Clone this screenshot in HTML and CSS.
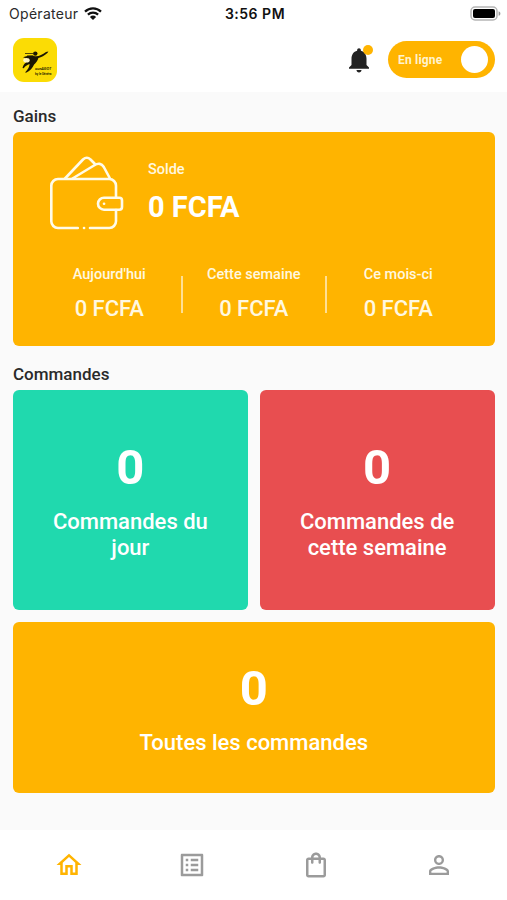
FILE: index.html
```html
<!DOCTYPE html>
<html lang="fr">
<head>
  <meta charset="UTF-8">
  <meta name="viewport" content="width=device-width, initial-scale=1.0">
  <title>Accueil</title>
  <link rel="stylesheet" href="styles.css">
</head>
<body>
  <div class="status-bar">
    <div class="carrier">
      <span>Opérateur</span>
      <svg class="wifi" viewBox="0 0 18 13">
        <path d="M1 4.600a11.600 11.600 0 0 1 16 0M3.900 7.600a7.400 7.400 0 0 1 10.200 0" fill="none" stroke="#111" stroke-width="2.200"/>
        <path d="M9 13L5.900 9.900a4.500 4.500 0 0 1 6.200 0z" fill="#111"/>
      </svg>
    </div>
    <div class="time">3:56 PM</div>
    <div class="battery-box">
      <svg class="battery" viewBox="0 0 31 15">
        <rect x="1" y="1" width="26" height="13" rx="4" fill="#fff" stroke="#b5b5b5" stroke-width="1.500"/>
        <rect x="3" y="3" width="22" height="9" rx="2" fill="#000"/>
        <path d="M28.600 5.200c2.400.8 2.400 3.800 0 4.600z" fill="#999"/>
      </svg>
    </div>
  </div>

  <header class="header">
    <svg class="logo" viewBox="0 0 44 44">
      <rect width="44" height="44" rx="11" fill="#fbdc05"/>
      <g fill="#1b1703">
        <circle cx="22.300" cy="15.600" r="2.200"/>
        <path d="M10 19.200c4-1.200 8-1.800 12-1 4 .4 7-1.500 11-4.200l2.400-.6-1 1.600c-3 2.500-6 4.400-9 5-.8 2.700-2.500 4.900-4.300 6.400-1.600 3.400-4 6.300-7.500 8.200l-1.600-.2c3-2.800 4.400-5.200 4.600-8.400-2.500 1-4.500 2.200-5.800 4.200l-1.300-.2c.5-3 2.500-5.300 5.500-7-1.300-2.200-2.800-3.300-5-3.800z"/>
        <path d="M12 15h8v.8h-8zM14 17h6v.6h-6z"/>
      </g>
      <ellipse cx="13.500" cy="22.300" rx="3.200" ry="2.300" fill="#fff6c4"/>
      <text class="logo-name" x="22" y="31.500">sunAGOT</text>
      <text class="logo-sub" x="22" y="36.500">by le Sénéra</text>
    </svg>
    <div class="header-actions">
      <div class="bell">
        <svg viewBox="0 0 24 24"><path fill="#222" d="M12 22c1.100 0 2-.9 2-2h-4c0 1.100.9 2 2 2zm6-6v-5c0-3.070-1.640-5.640-4.500-6.320V4c0-.83-.67-1.500-1.500-1.500s-1.500.67-1.500 1.500v.68C7.630 5.360 6 7.920 6 11v5l-2 2v1h16v-1l-2-2z"/></svg>
        <span class="bell-dot"></span>
      </div>
      <div class="toggle">
        <span>En ligne</span>
        <div class="toggle-knob"></div>
      </div>
    </div>
  </header>

  <main class="content">
    <h2 class="section-title">Gains</h2>
    <section class="card earnings">
      <div class="balance">
        <svg class="wallet" viewBox="0 0 76 76" fill="none" stroke="#fffbea" stroke-width="2.600" stroke-linecap="round" stroke-linejoin="round">
          <path d="M28.800 73H9a6.700 6.700 0 0 1-6.700-6.700V30.700A6.700 6.700 0 0 1 9 24h51.300a6.700 6.700 0 0 1 6.700 6.700v12M67 55v11.300a6.700 6.700 0 0 1-6.700 6.700H41"/>
          <path d="M16 23.500L34 4.500q3.800-3.500 7.500 0l4 4M23.500 23.500L45 10.500q6.500-4 9.800 1.500L61 23.500"/>
          <path d="M70.300 42.700H55a6 6 0 0 0 0 12h15.300q2.700 0 2.700-2.700v-6.600q0-2.700-2.700-2.700"/>
          <path d="M35 73h.1M55 48.700h.1"/>
        </svg>
        <div>
          <div class="balance-label">Solde</div>
          <div class="balance-value">0 FCFA</div>
        </div>
      </div>
      <div class="periods">
        <div class="period">
          <div class="period-label">Aujourd'hui</div>
          <div class="period-value">0 FCFA</div>
        </div>
        <div class="period">
          <div class="period-label">Cette semaine</div>
          <div class="period-value">0 FCFA</div>
        </div>
        <div class="period">
          <div class="period-label">Ce mois-ci</div>
          <div class="period-value">0 FCFA</div>
        </div>
      </div>
    </section>

    <h2 class="section-title orders-title">Commandes</h2>
    <section class="orders">
      <div class="card order green">
        <div class="count">0</div>
        <div class="order-label">Commandes du jour</div>
      </div>
      <div class="card order red">
        <div class="count">0</div>
        <div class="order-label">Commandes de cette semaine</div>
      </div>
      <div class="card order all">
        <div class="count">0</div>
        <div class="order-label">Toutes les commandes</div>
      </div>
    </section>
  </main>

  <nav class="navbar">
    <a class="active"><svg viewBox="0 0 24 24"><path d="M12 5.690l5 4.500V18h-2v-6H9v6H7v-7.810l5-4.500M12 3L2 12h3v8h6v-6h2v6h6v-8h3L12 3z"/></svg></a>
    <a><svg viewBox="0 0 24 24"><path d="M19 5v14H5V5h14m1.100-2H3.900c-.5 0-.9.4-.9.9v16.200c0 .4.4.9.9.9h16.200c.4 0 .9-.5.9-.9V3.900c0-.5-.5-.9-.9-.9zM11 7h6v2h-6V7zm0 4h6v2h-6v-2zm0 4h6v2h-6zM7 7h2v2H7zm0 4h2v2H7zm0 4h2v2H7z"/></svg></a>
    <a><svg viewBox="0 0 24 24"><path d="M18 6h-2c0-2.210-1.790-4-4-4S8 3.790 8 6H6c-1.100 0-2 .9-2 2v12c0 1.100.9 2 2 2h12c1.100 0 2-.9 2-2V8c0-1.100-.9-2-2-2zm-6-2c1.100 0 2 .9 2 2h-4c0-1.100.9-2 2-2zm6 16H6V8h2v2c0 .55.45 1 1 1s1-.45 1-1V8h4v2c0 .55.45 1 1 1s1-.45 1-1V8h2v12z"/></svg></a>
    <a><svg viewBox="0 0 24 24"><path d="M12 5.900a2.100 2.100 0 1 1 0 4.200 2.100 2.100 0 0 1 0-4.200m0 9c2.970 0 6.100 1.460 6.100 2.100v1.100H5.900V17c0-.64 3.130-2.100 6.100-2.100M12 4C9.790 4 8 5.790 8 8s1.790 4 4 4 4-1.790 4-4-1.790-4-4-4zm0 9c-2.670 0-8 1.340-8 4v3h16v-3c0-2.660-5.330-4-8-4z"/></svg></a>
  </nav>
</body>
</html>
```
FILE: styles.css
```css
:root {
  --yellow: #ffb400;
  --green: #20d9ae;
  --red: #e84e50;
  --bg: #fafafa;
  --text: #2a2a2a;
  --radius: 6px;
}
* {
  box-sizing: border-box;
  margin: 0;
  padding: 0;
}
body {
  display: flex;
  flex-direction: column;
  height: 900px;
  background: var(--bg);
  color: var(--text);
  font-family: Roboto, sans-serif;
}
svg {
  display: block;
}
.status-bar {
  display: grid;
  grid-template-columns: 1fr auto 1fr;
  align-items: center;
  height: 27px;
  padding: 0 6px 0 9px;
  background: #fff;
  font-family: Inter, sans-serif;
  font-size: 14px;
}
.carrier {
  display: flex;
  align-items: center;
  gap: 6px;
  letter-spacing: 0.3px;
}
.wifi {
  width: 18px;
  height: 13px;
}
.time {
  font-weight: 600;
  letter-spacing: 0.5px;
  color: #111;
}
.battery-box {
  display: flex;
  justify-content: flex-end;
}
.battery {
  width: 31px;
  height: 15px;
}
.header {
  display: flex;
  align-items: center;
  justify-content: space-between;
  height: 65px;
  padding: 0 12px 0 13px;
  background: #fff;
}
.logo {
  width: 44px;
  height: 44px;
}
.logo-name {
  font-size: 4px;
  font-weight: 500;
  font-style: italic;
}
.logo-sub {
  font-size: 3px;
  font-weight: 500;
}
.header-actions {
  display: flex;
  align-items: center;
  gap: 14px;
}
.bell {
  position: relative;
  width: 30px;
}
.bell-dot {
  position: absolute;
  top: 0;
  right: 1px;
  width: 10px;
  height: 10px;
  border-radius: 50%;
  background: var(--yellow);
}
.toggle {
  display: flex;
  align-items: center;
  justify-content: space-between;
  width: 107px;
  height: 37px;
  padding: 0 7px 0 10px;
  border-radius: 19px;
  background: var(--yellow);
  color: #fff3cf;
  font-size: 12px;
  font-weight: 700;
  letter-spacing: 0.2px;
}
.toggle-knob {
  width: 27px;
  height: 27px;
  border-radius: 50%;
  background: #fff;
}
.content {
  flex: 1;
  padding: 11.500px 12.500px 0 13px;
}
.section-title {
  height: 28px;
  font-size: 17px;
  font-weight: 500;
  line-height: 24px;
}
.orders-title {
  margin-top: 16px;
}
.card {
  border-radius: var(--radius);
  color: #fff;
}
.earnings {
  height: 214px;
  padding: 23px 24px 0;
  background: var(--yellow);
}
.balance {
  display: flex;
  gap: 23px;
  padding-left: 12px;
}
.wallet {
  width: 76px;
  height: 76px;
}
.balance-label {
  margin-top: 6px;
  font-size: 14.500px;
  font-weight: 500;
  line-height: 18px;
  color: #fff8e0;
}
.balance-value {
  margin-top: 11px;
  font-size: 29px;
  font-weight: 700;
  line-height: 34px;
}
.periods {
  display: grid;
  grid-template-columns: repeat(3, 1fr);
  margin-top: 35px;
}
.period {
  position: relative;
  text-align: center;
  color: #fff8e0;
}
.period + .period::before {
  content: "";
  position: absolute;
  left: -1px;
  top: 10px;
  width: 2px;
  height: 37px;
  background: #ffdf94;
}
.period-label {
  font-size: 14.500px;
  font-weight: 500;
  line-height: 18px;
}
.period-value {
  margin-top: 12px;
  font-size: 22px;
  font-weight: 500;
  line-height: 26px;
}
.orders {
  display: grid;
  grid-template-columns: 1fr 1fr;
  gap: 12px;
}
.order {
  display: flex;
  flex-direction: column;
  align-items: center;
  height: 220px;
  padding: 49px 36px 0;
  text-align: center;
}
.green {
  background: var(--green);
}
.red {
  background: var(--red);
}
.all {
  grid-column: span 2;
  height: 171px;
  padding-top: 38px;
  background: var(--yellow);
}
.count {
  font-size: 49px;
  font-weight: 700;
  line-height: 58px;
}
.order-label {
  margin-top: 12.500px;
  font-size: 22px;
  font-weight: 500;
  line-height: 26px;
}
.navbar {
  display: flex;
  align-items: center;
  justify-content: space-around;
  height: 70px;
  padding: 0 6px 0 7px;
  background: #fff;
}
.navbar svg {
  width: 30px;
  height: 30px;
  fill: #9b9b9b;
}
.navbar .active svg {
  fill: var(--yellow);
}
```
